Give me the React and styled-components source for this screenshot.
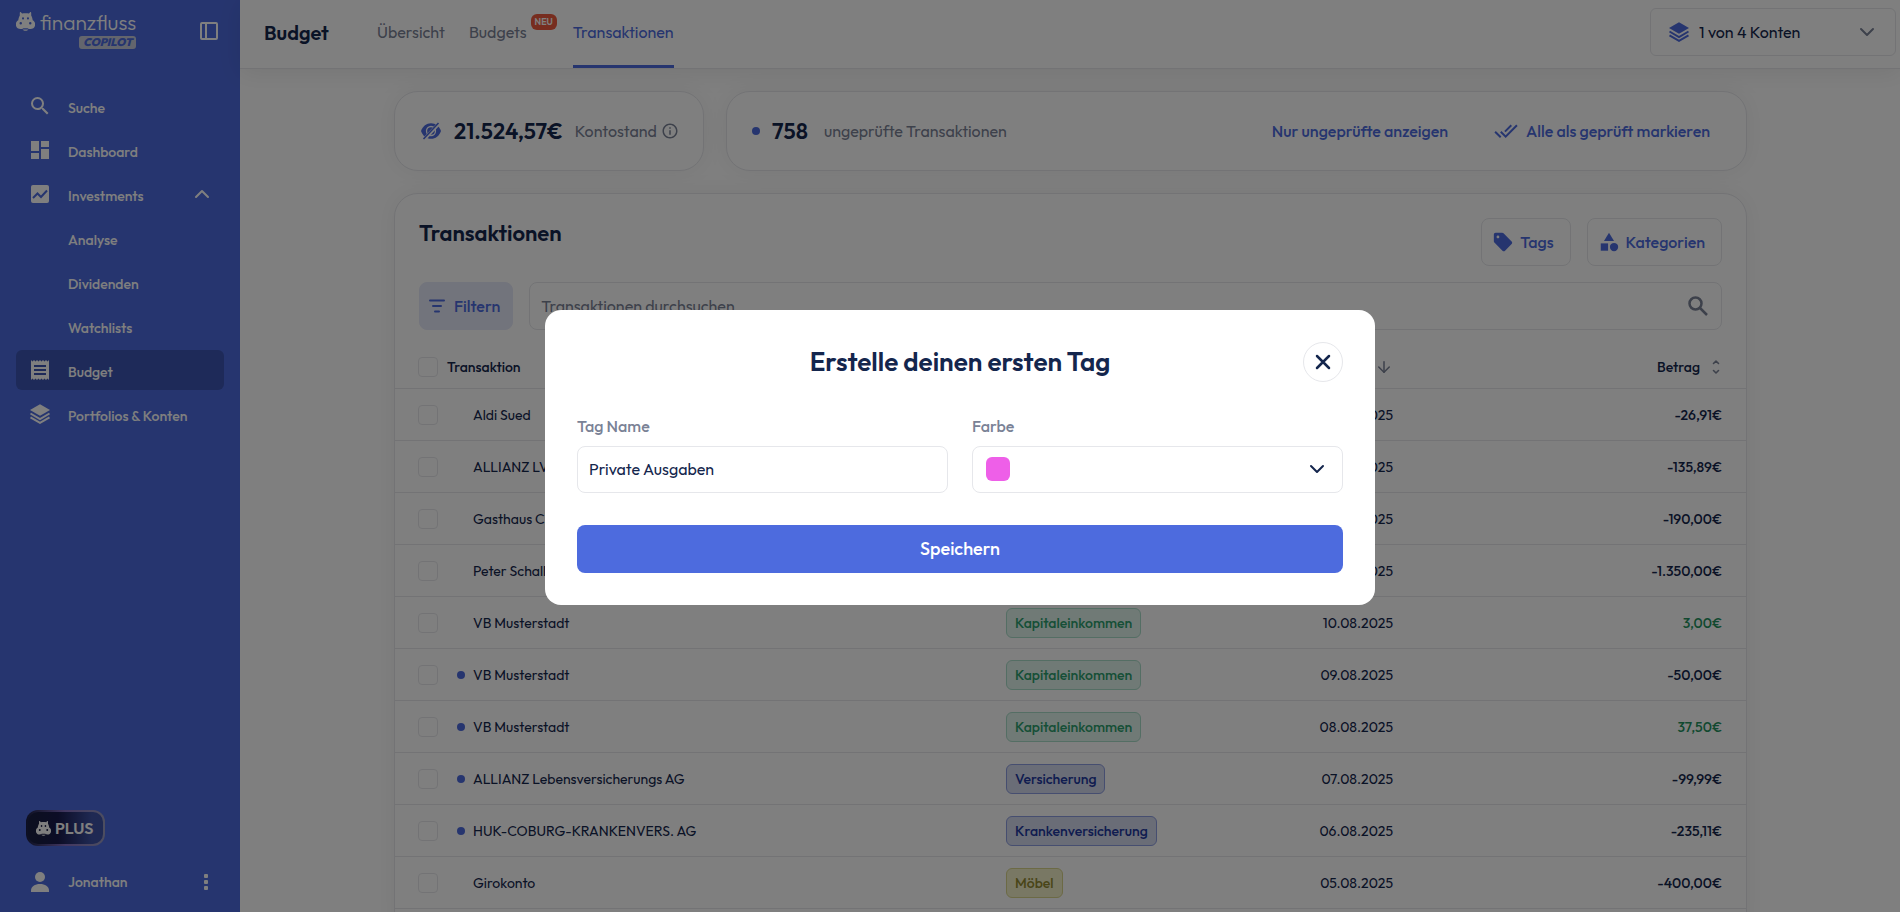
import React from 'react'
import styled, { createGlobalStyle, css } from 'styled-components'
import {
    MdSearch,
    MdDashboard,
    MdReceipt,
    MdSell,
    MdCategory,
    MdDoneAll,
    MdInfoOutline,
} from 'react-icons/md'
import { LuArrowDown, LuChevronDown, LuChevronUp } from 'react-icons/lu'

const blue = '#4d6bde'
const navy = '#14264d'
const muted = '#7a8296'
const line = '#e6e7eb'

const GlobalStyle = createGlobalStyle`
  * {
    box-sizing: border-box;
  }
  body {
    margin: 0;
    overflow: hidden;
    background: #fff;
    color: ${navy};
    font-family: Outfit, Lato, sans-serif;
    font-size: 16px;
  }
  button, input, select {
    font: inherit;
    color: inherit;
  }
  button {
    cursor: pointer;
  }
  svg {
    display: block;
    flex: none;
  }
  h1, h2 {
    margin: 0;
  }
`

/* icons */

function Hippo({ size }) {
    return (
        <svg width={size} height={size} viewBox="0 0 20 20" fill="currentColor" fillRule="evenodd">
            <path d="M4 .8c0-.8.9-1 1.400-.4l1 1.200c2.200-.5 5-.5 7.200 0l1-1.200c.5-.6 1.400-.4 1.400.4v2.800c1.100 1.600 1.300 3.400 1.600 5 1.700 1 2.600 2.600 2.600 4.400 0 3-2.200 5-5 5-1.300 0-2.200-.4-3-1H7.800c-.8.6-1.700 1-3 1-2.800 0-5-2-5-5 0-1.800.9-3.400 2.600-4.400.3-1.600.5-3.400 1.600-5zM7.400 5.400a1.100 1.300 0 1 0 0 2.600 1.100 1.300 0 0 0 0-2.600zm5.200 0a1.100 1.300 0 1 0 0 2.600 1.100 1.300 0 0 0 0-2.600zM5 10.600a1.300 1.300 0 1 0 0 2.600 1.300 1.300 0 0 0 0-2.600zm10 0a1.300 1.300 0 1 0 0 2.600 1.300 1.300 0 0 0 0-2.600z" />
            <path d="M7 18.300h6c-.6 1-1.600 1.500-3 1.500s-2.400-.5-3-1.500z" />
        </svg>
    )
}

function PanelIcon() {
    return (
        <svg width="18" height="18" viewBox="0 0 18 18" fill="none" stroke="currentColor" strokeWidth="2">
            <rect x="1" y="1" width="16" height="16" rx="1" />
            <path d="M6 1v16" />
        </svg>
    )
}

function TrendIcon() {
    return (
        <svg width="24" height="24" viewBox="0 0 24 24">
            <rect x="3" y="3" width="18" height="18" rx="2" fill="currentColor" />
            <path d="M5 16l4.500-4.500 3.500 3.500 6-6.500" fill="none" stroke={blue} strokeWidth="2" />
        </svg>
    )
}

function LayersIcon() {
    return (
        <svg width="24" height="24" viewBox="0 0 24 24" fill="none" stroke="currentColor" strokeWidth="2">
            <path d="M12 2.200 22 8 12 13.800 2 8z" fill="currentColor" stroke="none" />
            <path d="M2.500 11.500 12 17l9.500-5.500M2.500 15.300 12 20.800l9.500-5.500" />
        </svg>
    )
}

function EyeOffIcon() {
    return (
        <svg width="22" height="22" viewBox="0 0 22 22">
            <path d="M1 11c1.800-5 5.400-7.800 10-7.800S19.200 6 21 11c-1.800 5-5.400 7.800-10 7.800S2.800 16 1 11z" fill="currentColor" />
            <circle cx="11" cy="11" r="4.500" fill="none" stroke="#fff" strokeWidth="1.300" />
            <path d="M4 19.500 19 3.500" stroke="#fff" strokeWidth="3.400" />
            <path d="M3.500 19 18.500 3" stroke="currentColor" strokeWidth="1.600" />
        </svg>
    )
}

function FilterIcon() {
    return (
        <svg width="22" height="22" viewBox="0 0 22 22" stroke="currentColor" strokeWidth="2" strokeLinecap="round">
            <path d="M4 5.500h14M7 11h8M9 16.500h4" />
        </svg>
    )
}

function BoldSearchIcon() {
    return (
        <svg width="24" height="24" viewBox="0 0 24 24" fill="none" stroke="currentColor" strokeWidth="2.500">
            <circle cx="9.500" cy="9.500" r="6" />
            <path d="M14 14l7 7" />
        </svg>
    )
}

function SortIcon() {
    return (
        <svg width="16" height="16" viewBox="0 0 16 16" fill="none" stroke="currentColor" strokeWidth="1.600" strokeLinecap="round" strokeLinejoin="round">
            <path d="M5.500 4.500 8 2l2.500 2.500M5.500 11.500 8 14l2.500-2.500" />
        </svg>
    )
}

function PersonIcon() {
    return (
        <svg width="18" height="20" viewBox="0 0 18 20" fill="currentColor">
            <circle cx="9" cy="5" r="5" />
            <path d="M0 20v-1.500C0 14.500 4 12 9 12s9 2.500 9 6.500V20z" />
        </svg>
    )
}

function DotsIcon() {
    return (
        <svg width="4" height="16" viewBox="0 0 4 16" fill="currentColor">
            <rect width="4" height="4" rx="1" />
            <rect y="6" width="4" height="4" rx="1" />
            <rect y="12" width="4" height="4" rx="1" />
        </svg>
    )
}

function CloseIcon() {
    return (
        <svg width="16" height="16" viewBox="0 0 16 16" stroke="currentColor" strokeWidth="2.500" strokeLinecap="round">
            <path d="M2 2l12 12M14 2 2 14" />
        </svg>
    )
}

/* sidebar */

const Page = styled.div`
  display: flex;
  height: 100vh;
`
const Sidebar = styled.aside`
  flex: none;
  width: 240px;
  padding: 8px 16px 8px;
  display: flex;
  flex-direction: column;
  background: ${blue};
  color: #fff;
`
const SidebarTop = styled.div`
  display: flex;
  justify-content: space-between;
  align-items: flex-start;
  height: 78px;
`
const Logo = styled.a`
  display: flex;
  gap: 5px;
  padding-top: 4px;
  color: #fff;
  text-decoration: none;
`
const LogoText = styled.div`
  display: flex;
  flex-direction: column;
  align-items: flex-end;
  font-size: 21px;
  font-weight: 300;
  line-height: 20px;
`
const Copilot = styled.span`
  margin-top: 4px;
  padding: 0 4px;
  border-radius: 3px;
  background: #c6cbda;
  color: ${blue};
  font-size: 11px;
  font-weight: 900;
  font-style: italic;
  line-height: 13px;
`
const IconButton = styled.button`
  display: flex;
  padding: 6px;
  border: 0;
  background: none;
`
const ToggleButton = styled(IconButton)`
  margin-top: 8px;
`
const Nav = styled.nav`
  flex: 1;
  display: flex;
  flex-direction: column;
  gap: 4px;
`
const NavItem = styled.a`
  display: grid;
  grid-template-columns: 24px 1fr auto;
  column-gap: 16px;
  align-items: center;
  height: 40px;
  padding: 0 10px 0 12px;
  border-radius: 6px;
  background: ${(p) => (p.$active ? '#3c55b2' : 'none')};
  color: #fff;
  font-size: 14px;
  font-weight: 500;
  text-decoration: none;
`
const NavLabel = styled.span`
  grid-column: 2;
  padding-top: 4px;
`
const Plus = styled.a`
  align-self: flex-start;
  display: flex;
  align-items: center;
  gap: 4px;
  height: 36px;
  margin: 0 0 16px 10px;
  padding: 0 10px 0 8px;
  border: 2px solid transparent;
  border-radius: 12px;
  background:
    linear-gradient(90deg, #181e42 10%, #191a4c 40%, #3e52a6 85%) padding-box,
    linear-gradient(90deg, #181e42, #8670c4 50%, #9a9cc0) border-box;
  color: #fff;
  font-weight: 600;
  text-decoration: none;
`
const User = styled.div`
  display: grid;
  grid-template-columns: 24px 1fr auto;
  column-gap: 16px;
  align-items: center;
  justify-items: center;
  height: 42px;
  padding: 0 10px 2px 12px;
  font-size: 14px;
  font-weight: 500;
`
const UserName = styled.span`
  justify-self: start;
`

/* header */

const Main = styled.div`
  flex: 1;
  min-width: 0;
  display: flex;
  flex-direction: column;
`
const Header = styled.header`
  flex: none;
  display: flex;
  align-items: center;
  height: 69px;
  padding: 0 4px 4px 24px;
  border-bottom: 1px solid ${line};
  box-shadow: 0 4px 24px rgba(0, 0, 0, 0.08);
`
const PageTitle = styled.h1`
  width: 113px;
  font-size: 20px;
  font-weight: 600;
`
const Tabs = styled.nav`
  flex: 1;
  align-self: stretch;
  display: flex;
  gap: 24px;
  margin-bottom: -4px;
`
const Tab = styled.a`
  display: flex;
  align-items: center;
  padding-top: 2px;
  padding-bottom: 4px;
  border-bottom: 3px solid transparent;
  color: ${muted};
  text-decoration: none;
  ${(p) =>
      p.$active &&
      css`
        border-color: ${blue};
        color: ${blue};
      `}
`
const New = styled.span`
  align-self: flex-start;
  margin: 12px -8px 0 4px;
  padding: 0 4px;
  border-radius: 6px;
  background: #ee5b3e;
  color: #fff;
  font-size: 9px;
  font-weight: 600;
  line-height: 16px;
`
const AccountSelect = styled.label`
  display: flex;
  align-items: center;
  gap: 8px;
  width: 246px;
  height: 48px;
  padding: 0 16px;
  border: 1px solid ${line};
  border-radius: 6px;
  color: ${blue};
`
const PlainSelect = styled.select`
  flex: 1;
  min-width: 0;
  height: 100%;
  padding: 0;
  border: 0;
  outline: 0;
  appearance: none;
  background: none;
  color: ${navy};
`

/* content */

const Content = styled.main`
  flex: 1;
  width: 100%;
  max-width: 1402px;
  margin: 0 auto;
  padding: 22px 24px 0 25px;
`
const Summary = styled.div`
  display: grid;
  grid-template-columns: 310px 1fr;
  gap: 22px;
  margin-bottom: 22px;
`
const Card = styled.section`
  border: 1px solid ${line};
  border-radius: 24px;
  background: #fff;
  box-shadow: 0 0 24px rgba(0, 0, 0, 0.06);
`
const TableCard = styled(Card)`
  padding-bottom: 32px;
`
const SummaryCard = styled(Card)`
  display: flex;
  align-items: center;
  height: 80px;
  padding: 0 24px 0 25px;
  color: ${muted};
`
const Figure = styled.strong`
  margin: 0 ${(p) => p.$gap}px 0 12px;
  color: ${navy};
  font-size: 22px;
  font-weight: 600;
`
const Blue = styled.span`
  color: ${blue};
`
const Info = styled.span`
  margin-left: 4px;
`
const Dot = styled.span`
  flex: none;
  width: 8px;
  height: 8px;
  border-radius: 50%;
  background: ${blue};
`
const CardActions = styled.div`
  display: flex;
  gap: 46px;
  margin-left: auto;
  padding-right: 12px;
`
const TextButton = styled.button`
  display: flex;
  align-items: center;
  gap: 8px;
  padding: 0;
  border: 0;
  background: none;
  color: ${blue};
  font-weight: 500;
`
const Toolbar = styled.div`
  display: flex;
  gap: 16px;
  padding: 24px 24px 0;
`
const SearchBar = styled(Toolbar)`
  padding-top: 16px;
  padding-bottom: 16px;
`
const CardTitle = styled.h2`
  flex: 1;
  font-size: 22px;
  font-weight: 600;
  line-height: 30px;
`
const ToolButton = styled.button`
  display: flex;
  align-items: center;
  gap: 6px;
  height: 48px;
  padding: 0 16px 0 10px;
  border: 1px solid ${line};
  border-radius: 8px;
  background: none;
  color: ${blue};
  font-weight: 500;
`
const FilterButton = styled(ToolButton)`
  padding: 0 12px 0 6px;
  border-color: #e5e8f8;
  background: #e5e8f8;
`
const SearchBox = styled.label`
  flex: 1;
  display: flex;
  align-items: center;
  height: 48px;
  padding: 0 11px;
  border: 1px solid ${line};
  border-radius: 8px;
  color: ${muted};
`
const SearchInput = styled.input`
  flex: 1;
  padding: 0;
  border: 0;
  outline: 0;
  background: none;
  &::placeholder {
    color: ${muted};
    opacity: 1;
  }
`

/* table */

const Table = styled.table`
  width: 100%;
  border-collapse: collapse;
  table-layout: fixed;
  font-size: 14px;
`
const Col = styled.col`
  width: ${(p) => p.$width};
`
const Th = styled.th`
  height: 42px;
  padding: 0;
  border-bottom: 1px solid ${line};
  font-weight: 500;
  text-align: left;
`
const Td = styled.td`
  height: 52px;
  padding: 2px 0 0;
  border-bottom: 1px solid ${line};
`
const CheckCell = styled.div`
  padding-left: 23px;
`
const Right = styled.div`
  display: flex;
  justify-content: flex-end;
  align-items: center;
  gap: 8px;
  padding-right: ${(p) => p.$pad || 0}px;
  color: ${(p) => (p.$positive ? '#24935f' : navy)};
  font-weight: ${(p) => (p.$strong ? 500 : 400)};
  svg {
    color: ${muted};
  }
`
const Name = styled.div`
  display: flex;
  align-items: center;
  padding-left: ${(p) => (p.$unchecked ? 10 : 26)}px;
  gap: 8px;
`
const Checkbox = styled.input`
  display: block;
  width: 20px;
  height: 20px;
  margin: 0;
  appearance: none;
  border: 1px solid ${line};
  border-radius: 4px;
`
const pillColors = {
    green: ['#e0f4ec', '#a8dcc8', '#2c9f6e'],
    blue: ['#d5daee', '#8d9de0', '#2138a0'],
    yellow: ['#f2f0c8', '#d8d48a', '#938a30'],
}
const Pill = styled.span`
  display: inline-block;
  padding: 0 8px;
  border: 1px solid ${(p) => pillColors[p.$color][1]};
  border-radius: 6px;
  background: ${(p) => pillColors[p.$color][0]};
  color: ${(p) => pillColors[p.$color][2]};
  font-weight: 500;
  line-height: 28px;
`

/* dialog */

const Overlay = styled.div`
  position: fixed;
  inset: 0;
  display: flex;
  align-items: center;
  justify-content: center;
  padding: 3px 0 0 20px;
  background: rgba(0, 0, 0, 0.5);
`
const Dialog = styled.form`
  width: 830px;
  padding: 32px;
  border-radius: 16px;
  background: #fff;
`
const DialogHead = styled.div`
  display: grid;
  grid-template-columns: 40px 1fr 40px;
  align-items: center;
  margin-bottom: 32px;
`
const DialogTitle = styled.h2`
  grid-column: 2;
  padding-bottom: 2px;
  font-size: 26px;
  font-weight: 600;
  text-align: center;
`
const CloseButton = styled.button`
  display: flex;
  align-items: center;
  justify-content: center;
  height: 40px;
  padding: 0;
  border: 1px solid ${line};
  border-radius: 50%;
  background: none;
`
const Fields = styled.div`
  display: grid;
  grid-template-columns: 1fr 1fr;
  gap: 24px;
  margin-bottom: 32px;
`
const FieldLabel = styled.label`
  display: block;
  height: 32px;
  color: ${muted};
  font-weight: 500;
  line-height: 24px;
`
const TextInput = styled.input`
  width: 100%;
  height: 47px;
  padding: 0 11px 2px;
  border: 1px solid ${line};
  border-radius: 8px;
`
const ColorBox = styled.div`
  display: flex;
  align-items: center;
  height: 47px;
  padding: 0 13px 1px;
  border: 1px solid ${line};
  border-radius: 8px;
`
const Swatch = styled.span`
  width: 24px;
  height: 24px;
  border-radius: 6px;
  background: #ee5fe8;
`
const Save = styled.button`
  width: 100%;
  height: 48px;
  padding: 0 0 2px;
  border: 0;
  border-radius: 8px;
  background: ${blue};
  color: #fff;
  font-size: 18px;
  font-weight: 500;
`

const navItems = [
    { label: 'Suche', icon: <MdSearch size={24} /> },
    { label: 'Dashboard', icon: <MdDashboard size={24} /> },
    { label: 'Investments', icon: <TrendIcon />, open: true },
    { label: 'Analyse' },
    { label: 'Dividenden' },
    { label: 'Watchlists' },
    { label: 'Budget', icon: <MdReceipt size={24} />, active: true },
    { label: 'Portfolios & Konten', icon: <LayersIcon /> },
]

const rows = [
    { name: 'Aldi Sued', category: 'Lebensmittel', color: 'yellow', date: '14.08.2025', amount: '-26,91€' },
    { name: 'ALLIANZ LV AG', category: 'Versicherung', color: 'blue', date: '13.08.2025', amount: '-135,89€' },
    { name: 'Gasthaus Cramer', category: 'Restaurant', color: 'yellow', date: '12.08.2025', amount: '-190,00€' },
    { name: 'Peter Schaller', category: 'Miete', color: 'yellow', date: '11.08.2025', amount: '-1.350,00€' },
    { name: 'VB Musterstadt', category: 'Kapitaleinkommen', color: 'green', date: '10.08.2025', amount: '3,00€' },
    { name: 'VB Musterstadt', category: 'Kapitaleinkommen', color: 'green', date: '09.08.2025', amount: '-50,00€', open: true },
    { name: 'VB Musterstadt', category: 'Kapitaleinkommen', color: 'green', date: '08.08.2025', amount: '37,50€', open: true },
    { name: 'ALLIANZ Lebensversicherungs AG', category: 'Versicherung', color: 'blue', date: '07.08.2025', amount: '-99,99€', open: true },
    { name: 'HUK-COBURG-KRANKENVERS. AG', category: 'Krankenversicherung', color: 'blue', date: '06.08.2025', amount: '-235,11€', open: true },
    { name: 'Girokonto', category: 'Möbel', color: 'yellow', date: '05.08.2025', amount: '-400,00€' },
]

function SideNav() {
    return (
        <Sidebar>
            <SidebarTop>
                <Logo href="#">
                    <Hippo size={19} />
                    <LogoText>
                        finanzfluss
                        <Copilot>COPILOT</Copilot>
                    </LogoText>
                </Logo>
                <ToggleButton aria-label="Seitenleiste">
                    <PanelIcon />
                </ToggleButton>
            </SidebarTop>
            <Nav>
                {navItems.map((item) => (
                    <NavItem key={item.label} href="#" $active={item.active}>
                        {item.icon}
                        <NavLabel>{item.label}</NavLabel>
                        {item.open && <LuChevronUp size={24} />}
                    </NavItem>
                ))}
            </Nav>
            <Plus href="#">
                <Hippo size={15} />
                PLUS
            </Plus>
            <User>
                <PersonIcon />
                <UserName>Jonathan</UserName>
                <IconButton aria-label="Menü">
                    <DotsIcon />
                </IconButton>
            </User>
        </Sidebar>
    )
}

function TopBar() {
    return (
        <Header>
            <PageTitle>Budget</PageTitle>
            <Tabs>
                <Tab href="#">Übersicht</Tab>
                <Tab href="#">
                    Budgets <New>NEU</New>
                </Tab>
                <Tab href="#" $active>
                    Transaktionen
                </Tab>
            </Tabs>
            <AccountSelect>
                <LayersIcon />
                <PlainSelect aria-label="Konten">
                    <option>1 von 4 Konten</option>
                </PlainSelect>
                <LuChevronDown size={24} color={muted} />
            </AccountSelect>
        </Header>
    )
}

function Row({ row }) {
    return (
        <tr>
            <Td>
                <CheckCell>
                    <Checkbox type="checkbox" aria-label={row.name} />
                </CheckCell>
            </Td>
            <Td>
                <Name $unchecked={row.open}>
                    {row.open && <Dot />}
                    {row.name}
                </Name>
            </Td>
            <Td>
                <Pill $color={row.color}>{row.category}</Pill>
            </Td>
            <Td>
                <Right>{row.date}</Right>
            </Td>
            <Td>
                <Right $pad={24} $strong $positive={!row.amount.startsWith('-')}>
                    {row.amount}
                </Right>
            </Td>
        </tr>
    )
}

function Transactions() {
    return (
        <TableCard>
            <Toolbar>
                <CardTitle>Transaktionen</CardTitle>
                <ToolButton>
                    <MdSell size={22} /> Tags
                </ToolButton>
                <ToolButton>
                    <MdCategory size={22} /> Kategorien
                </ToolButton>
            </Toolbar>
            <SearchBar>
                <FilterButton>
                    <FilterIcon /> Filtern
                </FilterButton>
                <SearchBox>
                    <SearchInput aria-label="Suche" placeholder="Transaktionen durchsuchen" />
                    <BoldSearchIcon />
                </SearchBox>
            </SearchBar>
            <Table>
                <colgroup>
                    <Col $width="52px" />
                    <Col />
                    <Col $width="229px" />
                    <Col $width="158px" />
                    <Col $width="353px" />
                </colgroup>
                <thead>
                    <tr>
                        <Th>
                            <CheckCell>
                                <Checkbox type="checkbox" aria-label="Alle auswählen" />
                            </CheckCell>
                        </Th>
                        <Th>Transaktion</Th>
                        <Th>Kategorie</Th>
                        <Th>
                            <Right $strong>
                                Datum <LuArrowDown size={18} />
                            </Right>
                        </Th>
                        <Th>
                            <Right $pad={22} $strong>
                                Betrag <SortIcon />
                            </Right>
                        </Th>
                    </tr>
                </thead>
                <tbody>
                    {rows.map((row) => (
                        <Row key={row.date} row={row} />
                    ))}
                </tbody>
            </Table>
        </TableCard>
    )
}

function TagDialog() {
    return (
        <Overlay>
            <Dialog role="dialog" aria-labelledby="dialog-title">
                <DialogHead>
                    <DialogTitle id="dialog-title">Erstelle deinen ersten Tag</DialogTitle>
                    <CloseButton type="button" aria-label="Schließen">
                        <CloseIcon />
                    </CloseButton>
                </DialogHead>
                <Fields>
                    <div>
                        <FieldLabel htmlFor="tag-name">Tag Name</FieldLabel>
                        <TextInput id="tag-name" defaultValue="Private Ausgaben" />
                    </div>
                    <div>
                        <FieldLabel htmlFor="tag-color">Farbe</FieldLabel>
                        <ColorBox>
                            <Swatch />
                            <PlainSelect id="tag-color">
                                <option value="#ee5fe8" aria-label="Pink" />
                            </PlainSelect>
                            <LuChevronDown size={24} />
                        </ColorBox>
                    </div>
                </Fields>
                <Save type="button">Speichern</Save>
            </Dialog>
        </Overlay>
    )
}

export default function App() {
    return (
        <>
            <GlobalStyle />
            <Page>
                <SideNav />
                <Main>
                    <TopBar />
                    <Content>
                        <Summary>
                            <SummaryCard>
                                <Blue>
                                    <EyeOffIcon />
                                </Blue>
                                <Figure $gap={12}>21.524,57€</Figure>
                                Kontostand
                                <Info>
                                    <MdInfoOutline size={18} />
                                </Info>
                            </SummaryCard>
                            <SummaryCard>
                                <Dot />
                                <Figure $gap={16}>758</Figure>
                                ungeprüfte Transaktionen
                                <CardActions>
                                    <TextButton>Nur ungeprüfte anzeigen</TextButton>
                                    <TextButton>
                                        <MdDoneAll size={24} /> Alle als geprüft markieren
                                    </TextButton>
                                </CardActions>
                            </SummaryCard>
                        </Summary>
                        <Transactions />
                    </Content>
                </Main>
            </Page>
            <TagDialog />
        </>
    )
}
